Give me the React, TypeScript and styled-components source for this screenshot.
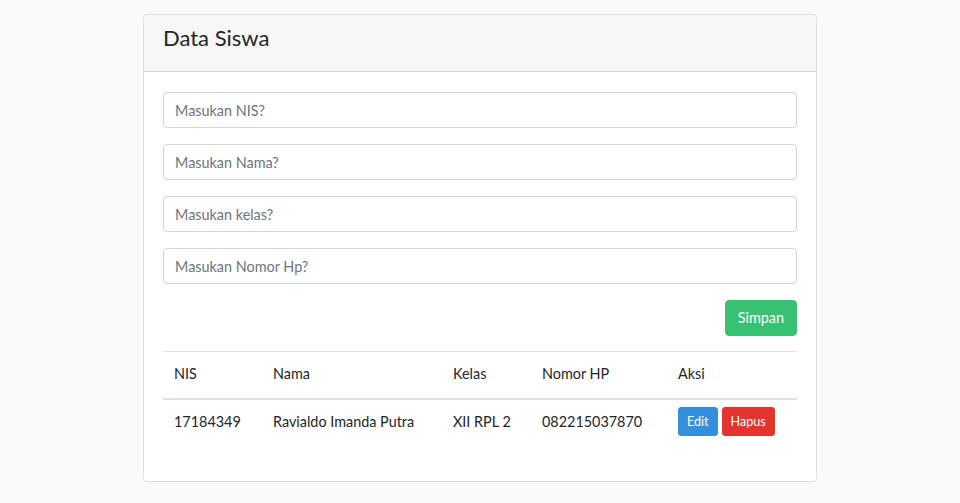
import React from "react";
import styled, { createGlobalStyle } from "styled-components";

const Global = createGlobalStyle`
  html, body { margin: 0; padding: 0; }
  body {
    background: #f8fafc;
    font-family: "Lato", "Noto Sans", sans-serif;
    font-size: 14.4px;
    line-height: 1.6;
    color: #212529;
  }
  * { box-sizing: border-box; }
`;

const Page = styled.div`
  display: flex;
  justify-content: center;
  padding-top: 14px;
  padding-bottom: 20px;
`;

const Card = styled.div`
  width: 674px;
  background: #fff;
  border: 1px solid rgba(0, 0, 0, 0.125);
  border-radius: 4px;
  overflow: hidden;
`;

const CardHeader = styled.div`
  background: rgba(0, 0, 0, 0.03);
  border-bottom: 1px solid rgba(0, 0, 0, 0.125);
  height: 57px;
  padding: 0 19px;
  display: flex;
  align-items: center;
`;

const Title = styled.h4`
  margin: 0 0 9px;
  font-size: 22px;
  font-weight: 400;
  line-height: 1.2;
  color: #212529;
`;

const CardBody = styled.div`
  padding: 20px 19px 20px 19px;
`;

const Input = styled.input`
  display: block;
  width: 100%;
  height: 36px;
  margin-bottom: 16px;
  padding: 6px 11px;
  font-family: inherit;
  font-size: 14.4px;
  color: #495057;
  background: #fff;
  border: 1px solid #ced4da;
  border-radius: 4px;
  outline: none;
  &::placeholder { color: #6c757d; }
`;

const Actions = styled.div`
  display: flex;
  justify-content: flex-end;
  margin-bottom: 15px;
`;

const Button = styled.button<{ $color: string; $small?: boolean }>`
  font-family: inherit;
  color: #fff;
  background: ${(p) => p.$color};
  border: 1px solid ${(p) => p.$color};
  border-radius: ${(p) => (p.$small ? "3px" : "4px")};
  font-size: ${(p) => (p.$small ? "12.6px" : "14.4px")};
  line-height: ${(p) => (p.$small ? "19px" : "22px")};
  padding: ${(p) => (p.$small ? "4px 8px" : "6px 12px")};
  cursor: pointer;
`;

const Table = styled.table`
  width: 100%;
  border-collapse: collapse;
  margin-bottom: 16px;
`;

const Th = styled.th<{ $w?: number }>`
  text-align: left;
  font-weight: 400;
  padding: 10px 11px 13px;
  line-height: 23px;
  border-top: 1px solid #dee2e6;
  border-bottom: 2px solid #dee2e6;
  width: ${(p) => (p.$w ? `${p.$w}px` : "auto")};
`;

const Td = styled.td`
  padding: 7px 11px 9px;
  line-height: 23px;
  vertical-align: middle;
  white-space: nowrap;
`;

const BtnGroup = styled.div`
  display: flex;
  gap: 4px;
`;

export default function App() {
  return (
    <>
      <Global />
      <Page>
        <Card>
          <CardHeader>
            <Title>Data Siswa</Title>
          </CardHeader>
          <CardBody>
            <Input placeholder="Masukan NIS?" />
            <Input placeholder="Masukan Nama?" />
            <Input placeholder="Masukan kelas?" />
            <Input placeholder="Masukan Nomor Hp?" />
            <Actions>
              <Button $color="#38c172">Simpan</Button>
            </Actions>
            <Table>
              <thead>
                <tr>
                  <Th $w={99}>NIS</Th>
                  <Th $w={180}>Nama</Th>
                  <Th $w={89}>Kelas</Th>
                  <Th $w={136}>Nomor HP</Th>
                  <Th>Aksi</Th>
                </tr>
              </thead>
              <tbody>
                <tr>
                  <Td>17184349</Td>
                  <Td>Ravialdo Imanda Putra</Td>
                  <Td>XII RPL 2</Td>
                  <Td>082215037870</Td>
                  <Td>
                    <BtnGroup>
                      <Button $color="#3490dc" $small>Edit</Button>
                      <Button $color="#e3342f" $small>Hapus</Button>
                    </BtnGroup>
                  </Td>
                </tr>
              </tbody>
            </Table>
          </CardBody>
        </Card>
      </Page>
    </>
  );
}
